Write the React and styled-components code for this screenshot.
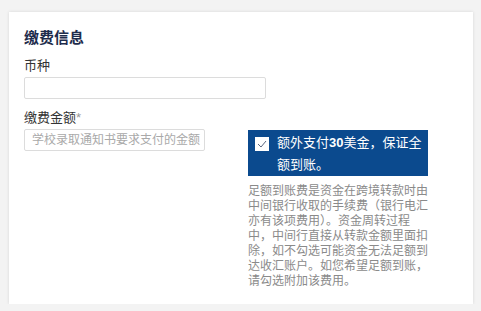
import React from 'react'
import styled, { createGlobalStyle } from 'styled-components';

const GlobalStyle = createGlobalStyle`
    body {
        margin: 0;
        background: #f3f3f3;
        font-family: "Liberation Sans", "Noto Sans CJK SC", sans-serif;
    }
`;

const CheckIcon = () => (
    <svg width="10" height="8" viewBox="0 0 10 8" fill="none">
        <path d="M1 4 L4 7 L9 1" stroke="#5a6680" strokeWidth="1" />
    </svg>
);

const App = () => {
    return <>
        <GlobalStyle />
        <Card>
            <Title>缴费信息</Title>
            <Label>币种</Label>
            <TextInput width={242} />
            <Label>缴费金额<Star>*</Star></Label>
            <AmountRow>
                <TextInput width={181} placeholder="学校录取通知书要求支付的金额" />
                <SideColumn>
                    <OptionBox>
                        <CheckBox><CheckIcon /></CheckBox>
                        <OptionText>额外支付<b>30</b>美金，保证全额到账。</OptionText>
                    </OptionBox>
                    <HelpText>
                        足额到账费是资金在跨境转款时由中间银行收取的手续费（银行电汇亦有该项费用）。资金周转过程中，中间行直接从转款金额里面扣除，如不勾选可能资金无法足额到达收汇账户。如您希望足额到账，请勾选附加该费用。
                    </HelpText>
                </SideColumn>
            </AmountRow>
        </Card>
    </>
};

export default App;

const Card = styled.div`
    box-sizing: border-box;
    margin: 12px 0 0 9px;
    width: 464px;
    height: 292px;
    background: #fff;
    box-shadow: 0 0 3px rgba(0, 0, 0, 0.12);
    padding: 16px 15px 0;
    display: flex;
    flex-direction: column;
    align-items: flex-start;
`;

const Title = styled.h2`
    margin: 0 0 9px;
    font-size: 15px;
    line-height: 20px;
    font-weight: bold;
    color: #1e2c4c;
`;

const Label = styled.div`
    font-size: 13px;
    line-height: 18px;
    color: #333;
    margin-bottom: 2px;
`;

const Star = styled.span`
    color: #999;
`;

const TextInput = styled.input`
    box-sizing: border-box;
    width: ${(props) => props.width}px;
    height: 22px;
    margin: 0 0 10px;
    padding: 0 1px 0 7px;
    border: 1px solid #dcdcdc;
    border-radius: 2px;
    font-family: inherit;
    font-size: 12px;
    outline: none;
    &::placeholder {
        color: #a9a9a9;
    }
`;

const AmountRow = styled.div`
    display: flex;
    align-items: flex-start;
    gap: 43px;
`;

const SideColumn = styled.div`
    width: 180px;
    margin-top: 1px;
`;

const OptionBox = styled.div`
    display: flex;
    align-items: flex-start;
    background: #0b4a8e;
    padding: 2px 6px 2px 7px;
    height: 46px;
    box-sizing: border-box;
`;

const CheckBox = styled.div`
    flex: none;
    width: 14px;
    height: 14px;
    margin-top: 5px;
    margin-right: 8px;
    background: #fff;
    display: grid;
    place-items: center;
`;

const OptionText = styled.div`
    color: #fff;
    font-size: 13px;
    line-height: 22px;
    b {
        font-weight: bold;
    }
`;

const HelpText = styled.p`
    margin: 8px 0 0;
    font-size: 12px;
    line-height: 15px;
    color: #8a8a8a;
`;
